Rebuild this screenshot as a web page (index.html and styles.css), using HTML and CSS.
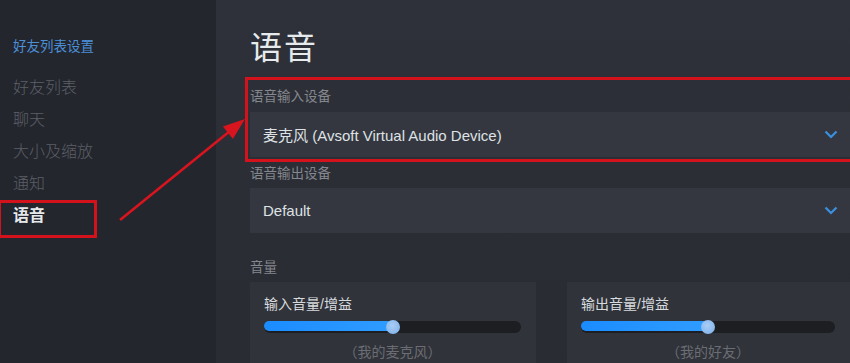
FILE: index.html
```html
<!DOCTYPE html>
<html lang="zh-CN">
<head>
    <meta charset="UTF-8">
    <title>好友列表设置 - 语音</title>
    <link rel="stylesheet" href="styles.css">
</head>
<body>
    <div class="app">
        <div class="sidebar">
            <div class="side-title">好友列表设置</div>
            <div class="side-item">好友列表</div>
            <div class="side-item">聊天</div>
            <div class="side-item">大小及缩放</div>
            <div class="side-item">通知</div>
            <div class="side-item active">语音</div>
        </div>

        <div class="main">
            <h1>语音</h1>

            <div class="field-box">
                <div class="field-label">语音输入设备</div>
                <div class="dropdown">
                    <span>麦克风 (Avsoft Virtual Audio Device)</span>
                    <svg class="chevron" width="14" height="9" viewBox="0 0 14 9"><polyline points="1.5,1.5 7,7 12.5,1.5" fill="none" stroke="#3a90e0" stroke-width="2.2"/></svg>
                </div>
            </div>

            <div class="field-label out">语音输出设备</div>
            <div class="dropdown">
                <span>Default</span>
                <svg class="chevron" width="14" height="9" viewBox="0 0 14 9"><polyline points="1.5,1.5 7,7 12.5,1.5" fill="none" stroke="#3a90e0" stroke-width="2.2"/></svg>
            </div>

            <div class="field-label volume">音量</div>
            <div class="cards">
                <div class="card">
                    <div class="card-title">输入音量/增益</div>
                    <div class="slider">
                        <div class="fill" style="width: 50%;"></div>
                        <div class="thumb" style="left: 50%;"></div>
                    </div>
                    <div class="caption">（我的麦克风）</div>
                </div>
                <div class="card">
                    <div class="card-title">输出音量/增益</div>
                    <div class="slider">
                        <div class="fill" style="width: 50%;"></div>
                        <div class="thumb" style="left: 50%;"></div>
                    </div>
                    <div class="caption">（我的好友）</div>
                </div>
            </div>
        </div>
    </div>

    <!-- annotation arrow -->
    <svg class="arrow" width="850" height="363" viewBox="0 0 850 363">
        <line x1="120" y1="220" x2="230" y2="131" stroke="#d8141e" stroke-width="2.6"/>
        <polygon points="245,119 232.9,139 222.9,126.6" fill="#d8141e"/>
    </svg>
</body>
</html>
```

FILE: styles.css
```css
body {
    margin: 0;
    width: 850px;
    height: 363px;
    overflow: hidden;
    background: #2a2d34;
    font-family: "Liberation Sans", "Noto Sans CJK SC", sans-serif;
    position: relative;
}
.app {
    display: flex;
    height: 363px;
}
.sidebar {
    width: 216px;
    flex-shrink: 0;
    background: #23262d;
    padding-top: 37px;
    box-sizing: border-box;
}
.side-title {
    color: #4b8fd8;
    font-size: 13.5px;
    line-height: 20px;
    padding-left: 13px;
    margin-bottom: 15px;
}
.side-item {
    color: #5c5f66;
    font-size: 16px;
    font-weight: 300;
    line-height: 32px;
    padding-left: 13px;
    position: relative;
}
.side-item.active {
    color: #e6e9eb;
    font-weight: bold;
}
.side-item.active::after {
    content: "";
    position: absolute;
    left: -2px;
    top: 0;
    width: 99px;
    height: 38px;
    border: 3px solid #d3121c;
    box-sizing: border-box;
}
.main {
    flex: 1;
    padding: 28px 0 0 34px;
    overflow: hidden;
    background: linear-gradient(180deg, #2e3139 0%, #2a2d34 60%, #292c33 100%);
}
h1 {
    margin: 0 0 9px 0;
    font-size: 32px;
    line-height: 40px;
    font-weight: normal;
    color: #e6eaed;
    letter-spacing: 2px;
}
.field-box {
    border: 3px solid #d3121c;
    margin: 0 -7px 0 -5px;
    padding: 7px 0 2px 2px;
}
.field-label {
    color: #84878d;
    font-size: 13.5px;
    line-height: 20px;
    margin-bottom: 5px;
}
.field-label.out {
    margin-top: 2px;
    margin-bottom: 4px;
}
.field-label.volume {
    margin-top: 25px;
    margin-bottom: 4px;
}
.dropdown {
    height: 45px;
    background: #34373f;
    display: flex;
    align-items: center;
    justify-content: space-between;
    padding: 0 12px 0 13px;
    color: #dfe2e5;
    font-size: 15px;
}
.field-box .dropdown {
    padding-right: 16px;
}
.chevron {
    display: block;
}
.cards {
    display: grid;
    grid-template-columns: 286px 1fr;
    gap: 31px;
}
.card {
    background: #30333a;
    padding: 12px 15px 10px 14px;
    height: 100px;
}
.card-title {
    color: #d8dbde;
    font-size: 14px;
    line-height: 20px;
}
.slider {
    position: relative;
    margin-top: 7px;
    height: 12px;
    border-radius: 6px;
    background: #1c1e22;
}
.fill {
    height: 10px;
    margin-top: 1px;
    border-radius: 5px;
    background: linear-gradient(90deg, #1b8cff, #2f9cff);
}
.thumb {
    position: absolute;
    top: -1px;
    width: 14px;
    height: 14px;
    margin-left: -7px;
    border-radius: 50%;
    background: radial-gradient(circle at 45% 40%, #a9cdf6, #7aaee8);
}
.caption {
    margin-top: 9px;
    text-align: center;
    color: #6a6d73;
    font-size: 14px;
    line-height: 20px;
}
.arrow {
    position: absolute;
    left: 0;
    top: 0;
    pointer-events: none;
}
```
